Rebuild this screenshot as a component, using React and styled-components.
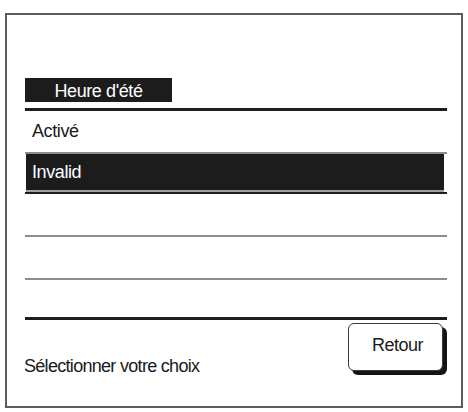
import React from "react";
import styled, { createGlobalStyle } from "styled-components";

const Global = createGlobalStyle`
  html, body { margin: 0; padding: 0; background: #ffffff; }
  body { width: 468px; height: 412px; overflow: hidden; font-family: "Liberation Sans", Arial, sans-serif; }
`;

const Frame = styled.div`
  box-sizing: border-box;
  margin: 13px 5px 0 5px;
  width: 458px;
  height: 395px;
  border: 2px solid #5c5c5c;
  padding: 63px 14px 0 18px;
  display: flex;
  flex-direction: column;
  color: #1a1a1a;
`;

const TitleTag = styled.div`
  width: 147px;
  height: 24px;
  background: #1c1c1c;
  color: #ffffff;
  font-size: 18px;
  line-height: 26px;
  text-align: center;
  letter-spacing: -0.4px;
`;

const Rule = styled.div`
  margin-top: 6px;
  height: 3px;
  background: #1e1e1e;
`;

const List = styled.div`
  display: flex;
  flex-direction: column;
`;

const Row = styled.div`
  box-sizing: border-box;
  height: ${(p) => p.$h}px;
  border-bottom: ${(p) =>
    p.$last ? "none" : `2px solid ${p.$selected ? "#1e1e1e" : "#8d8d8d"}`};
  display: flex;
  flex-direction: column;
`;

const Label = styled.div`
  flex: 1;
  display: flex;
  align-items: center;
  padding-left: 7px;
  font-size: 18px;
  letter-spacing: -0.4px;
  color: #1a1a1a;
`;

const Highlight = styled.div`
  flex: 1;
  display: flex;
  align-items: center;
  margin: 0 3px 0 1px;
  padding-left: 6px;
  background: #1c1c1c;
  border-bottom: 2px solid #a0a0a0;
  color: #ffffff;
  font-size: 18px;
  letter-spacing: -0.4px;
`;

const Footer = styled.div`
  border-top: 3px solid #1e1e1e;
  padding-top: 3px;
  display: flex;
  justify-content: space-between;
  align-items: flex-end;
`;

const Hint = styled.div`
  margin-left: -1px;
  margin-bottom: -5px;
  font-size: 18px;
  line-height: 20px;
  letter-spacing: -0.7px;
  color: #1a1a1a;
`;

const BackButton = styled.button`
  box-sizing: border-box;
  width: 95px;
  height: 48px;
  margin-right: 4px;
  border: 1.5px solid #3a3a3a;
  border-radius: 6px;
  background: #ffffff;
  box-shadow: 4px 4px 0 #151515;
  font-family: "Liberation Sans", Arial, sans-serif;
  font-size: 18px;
  letter-spacing: -0.5px;
  color: #1a1a1a;
  padding: 0 0 4px 4px;
  display: flex;
  align-items: center;
  justify-content: center;
`;

export default function App() {
  return (
    <>
      <Global />
      <Frame>
        <TitleTag>Heure d'été</TitleTag>
        <Rule />
        <List>
          <Row $h={43}>
            <Label>Activé</Label>
          </Row>
          <Row $h={40} $selected>
            <Highlight>Invalid</Highlight>
          </Row>
          <Row $h={43}>
            <Label />
          </Row>
          <Row $h={43}>
            <Label />
          </Row>
          <Row $h={37} $last>
            <Label />
          </Row>
        </List>
        <Footer>
          <Hint>Sélectionner votre choix</Hint>
          <BackButton>Retour</BackButton>
        </Footer>
      </Frame>
    </>
  );
}
